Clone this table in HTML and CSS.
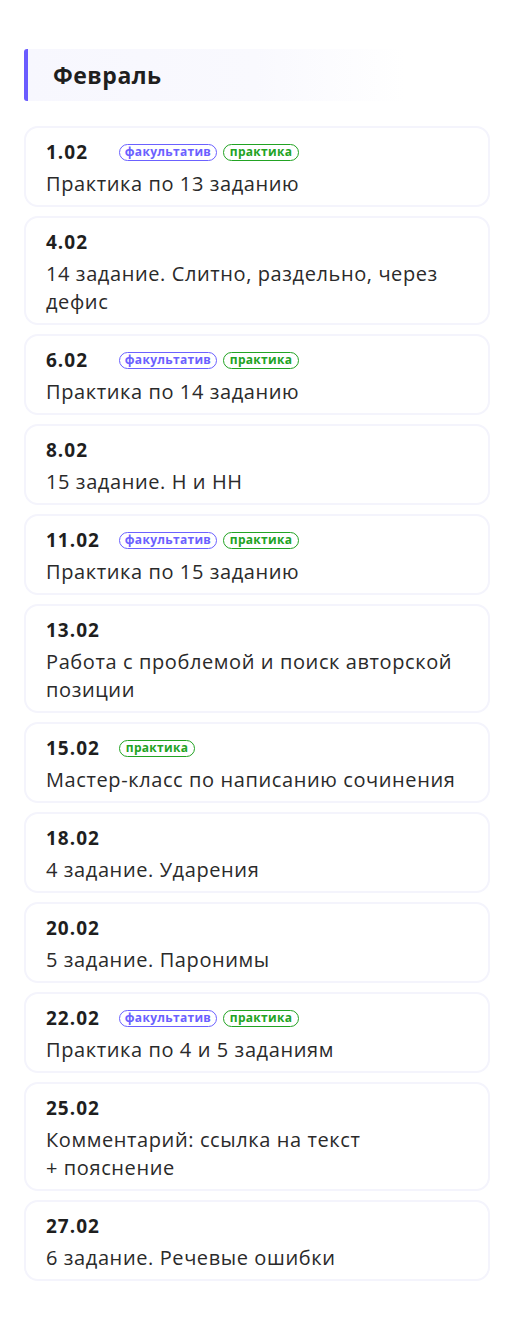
FILE: index.html
```html
<!DOCTYPE html>
<html lang="ru">
<head>
<meta charset="utf-8">
<title>Февраль</title>
<link rel="stylesheet" href="styles.css">
</head>
<body>
<main class="schedule">
  <h2 class="month">Февраль</h2>
  <ul class="lessons">
    <li class="lesson">
      <div class="lesson-head"><span class="date">1.02</span><span class="tag tag-opt">факультатив</span><span class="tag tag-prac">практика</span></div>
      <p class="title">Практика по 13 заданию</p>
    </li>
    <li class="lesson">
      <div class="lesson-head"><span class="date">4.02</span></div>
      <p class="title">14 задание. Слитно, раздельно, через дефис</p>
    </li>
    <li class="lesson">
      <div class="lesson-head"><span class="date">6.02</span><span class="tag tag-opt">факультатив</span><span class="tag tag-prac">практика</span></div>
      <p class="title">Практика по 14 заданию</p>
    </li>
    <li class="lesson">
      <div class="lesson-head"><span class="date">8.02</span></div>
      <p class="title">15 задание. Н и НН</p>
    </li>
    <li class="lesson">
      <div class="lesson-head"><span class="date">11.02</span><span class="tag tag-opt">факультатив</span><span class="tag tag-prac">практика</span></div>
      <p class="title">Практика по 15 заданию</p>
    </li>
    <li class="lesson">
      <div class="lesson-head"><span class="date">13.02</span></div>
      <p class="title">Работа с проблемой и поиск авторской позиции</p>
    </li>
    <li class="lesson">
      <div class="lesson-head"><span class="date">15.02</span><span class="tag tag-prac">практика</span></div>
      <p class="title">Мастер-класс по написанию сочинения</p>
    </li>
    <li class="lesson">
      <div class="lesson-head"><span class="date">18.02</span></div>
      <p class="title">4 задание. Ударения</p>
    </li>
    <li class="lesson">
      <div class="lesson-head"><span class="date">20.02</span></div>
      <p class="title">5 задание. Паронимы</p>
    </li>
    <li class="lesson">
      <div class="lesson-head"><span class="date">22.02</span><span class="tag tag-opt">факультатив</span><span class="tag tag-prac">практика</span></div>
      <p class="title">Практика по 4 и 5 заданиям</p>
    </li>
    <li class="lesson">
      <div class="lesson-head"><span class="date">25.02</span></div>
      <p class="title">Комментарий: ссылка на текст<br>+ пояснение</p>
    </li>
    <li class="lesson">
      <div class="lesson-head"><span class="date">27.02</span></div>
      <p class="title">6 задание. Речевые ошибки</p>
    </li>
  </ul>
</main>
</body>
</html>
```

FILE: styles.css
```css
* { box-sizing: border-box; }
html, body { margin: 0; padding: 0; background: #fff; }
body {
  font-family: "Open Sans", "Noto Sans", sans-serif;
  color: #222;
}
.schedule {
  padding: 49px 25px 40px 24px;
}
.month {
  margin: 0 0 25px 0;
  width: 381px;
  height: 52px;
  display: flex;
  align-items: center;
  padding-left: 25px;
  border-left: 4px solid #6b5cff;
  border-radius: 3px;
  background: linear-gradient(90deg, #f7f7fe 0%, #f9f9fe 60%, #ffffff 100%);
  font-size: 23px;
  font-weight: 700;
  letter-spacing: 0.5px;
  color: #1f1f1f;
}
.lessons {
  list-style: none;
  margin: 0;
  padding: 0;
  display: flex;
  flex-direction: column;
  gap: 9px;
}
.lesson {
  border: 2px solid #f4f4fc;
  border-radius: 14px;
  padding: 11px 20px 7px 20px;
}
.lesson-head {
  display: flex;
  align-items: center;
  gap: 6px;
  height: 26px;
}
.date {
  font-size: 19px;
  font-weight: 700;
  letter-spacing: 1px;
  color: #1f1f1f;
  min-width: 67px;
}
.tag {
  display: inline-flex;
  align-items: center;
  justify-content: center;
  height: 17px;
  padding: 0 4px;
  border: 1.5px solid;
  border-radius: 9px;
  font-size: 12px;
  font-weight: 700;
  letter-spacing: 0.3px;
  line-height: 1;
}
.tag-opt { color: #6b61ff; border-color: #6b61ff; width: 98px; }
.tag-prac { color: #22a323; border-color: #22a323; width: 76px; }
.title {
  margin: 5px 0 0 0;
  font-size: 20px;
  letter-spacing: 0.6px;
  line-height: 28px;
  color: #2a2a2a;
}
```
